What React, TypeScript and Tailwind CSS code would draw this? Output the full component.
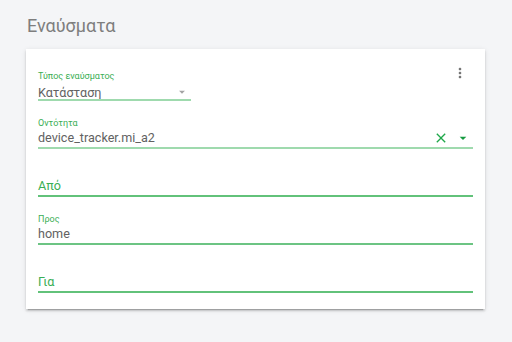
import { MdMoreVert, MdClose, MdArrowDropDown } from "react-icons/md";

const font = { fontFamily: "Roboto, 'Noto Sans', sans-serif" };

function Field({ label, value, line = "bg-[#9fdaae]" }: { label?: string; value?: string; line?: string }) {
    return (
        <div className="h-[48px] flex flex-col justify-end">
            {label && <span className="text-[9px] leading-[12px] text-[#3aae54]">{label}</span>}
            {value ? (
                <span className="text-[12.6px] leading-[18px] text-[#626262]">{value}</span>
            ) : null}
            <div className={`h-[2px] ${line}`} />
        </div>
    );
}

function Placeholder({ text }: { text: string }) {
    return (
        <div className="h-[48px] flex flex-col justify-end">
            <span className="text-[12.6px] leading-[18px] text-[#3aae54]">{text}</span>
            <div className="h-[2px] bg-[#62c27a]" />
        </div>
    );
}

export default function App() {
    return (
        <div className="w-[512px] h-[342px] bg-[#f4f5f7] px-[26px] pt-[14px]" style={font}>
            <h1 className="text-[18px] leading-[24px] text-[#7e7e7e] pl-[1px] mb-[11px]">Εναύσματα</h1>

            <div className="relative w-[459px] bg-white px-[12px] pt-[4px] pb-[16px] shadow-[0_2px_2px_rgba(0,0,0,0.14),0_1px_5px_rgba(0,0,0,0.1),0_3px_1px_-2px_rgba(0,0,0,0.2)]">
                <MdMoreVert className="absolute right-[17px] top-[16px] text-[#737373]" size={16} />

                <div className="h-[48px] w-[153px] flex flex-col justify-end">
                    <span className="text-[9px] leading-[12px] text-[#3aae54] mb-[3px]">Τύπος εναύσματος</span>
                    <div className="flex items-center justify-between leading-[13px]">
                        <span className="text-[12.6px] text-[#626262]">Κατάσταση</span>
                        <MdArrowDropDown className="text-[#a3a3a3] mr-[2px]" size={14} />
                    </div>
                    <div className="h-[2px] bg-[#9fdaae]" />
                </div>

                <div className="h-[48px] flex flex-col justify-end">
                    <span className="text-[9px] leading-[12px] text-[#3aae54]">Οντότητα</span>
                    <div className="flex items-center justify-between">
                        <span className="text-[12.6px] leading-[18px] text-[#626262]">device_tracker.mi_a2</span>
                        <div className="flex items-center gap-[6px] mr-[2px]">
                            <MdClose className="text-[#1fa84a]" size={16} />
                            <MdArrowDropDown className="text-[#169b40]" size={16} />
                        </div>
                    </div>
                    <div className="h-[2px] bg-[#9fdaae]" />
                </div>

                <Placeholder text="Από" />
                <Field label="Προς" value="home" line="bg-[#6cc483]" />
                <Placeholder text="Για" />
            </div>
        </div>
    );
}
